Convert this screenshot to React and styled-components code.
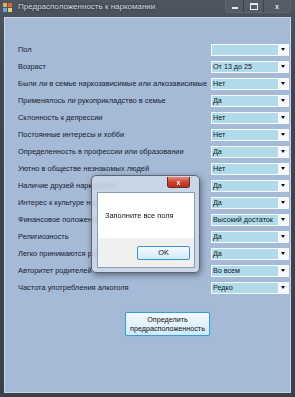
import React from "react";
import styled, { createGlobalStyle } from "styled-components";

const Global = createGlobalStyle`
  html, body { margin: 0; padding: 0; background: #3a414b; }
  body { font-family: "Liberation Sans", Arial, sans-serif; }
`;

const Window = styled.div`
  position: relative;
  width: 295px;
  height: 397px;
  box-sizing: border-box;
  background: linear-gradient(180deg, #4d5560 0%, #3f4651 20%, #3a414b 100%);
  display: flex;
  flex-direction: column;
  overflow: hidden;
`;

const TitleBar = styled.div`
  height: 17px;
  display: flex;
  align-items: flex-start;
  padding-left: 3px;
  box-sizing: border-box;
`;

const AppIcon = styled.div`
  width: 9px;
  height: 9px;
  margin-top: 3px;
  display: grid;
  grid-template-columns: 1fr 1fr;
  gap: 1px;
  span:nth-child(1) { background: #e8b04a; }
  span:nth-child(2) { background: #d8663a; }
  span:nth-child(3) { background: #6aa3d8; }
  span:nth-child(4) { background: #e0d070; }
`;

const Title = styled.div`
  margin-left: 6px;
  margin-top: 2px;
  font-family: "Liberation Sans", Arial, sans-serif;
  font-size: 8px;
  color: #d4d9e0;
  text-shadow: 0 0 3px rgba(0, 0, 0, 0.6);
  flex: 1;
`;

const Controls = styled.div`
  display: flex;
  height: 12px;
  margin-right: 4px;
  background: rgba(255, 255, 255, 0.05);
  border: 1px solid rgba(255, 255, 255, 0.08);
  border-top: none;
  border-radius: 0 0 3px 3px;
`;

const Ctrl = styled.div`
  width: ${(p) => p.$w}px;
  height: 100%;
  display: flex;
  align-items: center;
  justify-content: center;
  border-left: ${(p) => (p.$first ? "none" : "1px solid rgba(0,0,0,0.3)")};
  color: #dfe3e8;
  font-size: 7px;
  font-weight: bold;
`;

const MinGlyph = styled.div`
  width: 6px;
  height: 2px;
  margin-top: 4px;
  background: #e4e8ec;
`;

const MaxGlyph = styled.div`
  width: 6px;
  height: 4px;
  border: 1px solid #e4e8ec;
  border-top-width: 2px;
`;

const Client = styled.div`
  flex: 1;
  margin: 0 4px 4px 4px;
  background: #a5bad6;
  border: 1px solid #c8d4e2;
  box-sizing: border-box;
  display: flex;
  flex-direction: column;
`;

const Form = styled.div`
  display: flex;
  flex-direction: column;
  padding: 23px 1px 0 13px;
`;

const Row = styled.div`
  height: 17px;
  display: flex;
  align-items: center;
  justify-content: space-between;
`;

const Label = styled.div`
  font-family: "Liberation Sans", Arial, sans-serif;
  font-size: 7.45px;
  color: #152032;
  white-space: nowrap;
  overflow: hidden;
`;

const Combo = styled.div`
  flex: 0 0 78px;
  height: 12px;
  box-sizing: border-box;
  border: 1px solid #f4f8fb;
  background: #f6f9fb;
  display: flex;
  align-items: stretch;
`;

const ComboValue = styled.div`
  flex: 1;
  background: #b2dbe9;
  font-family: "Liberation Sans", Arial, sans-serif;
  font-size: 7.2px;
  line-height: 10px;
  color: #0e1826;
  padding-left: 1px;
  white-space: nowrap;
  overflow: hidden;
`;

const Arrow = styled.div`
  width: 10px;
  display: flex;
  align-items: center;
  justify-content: center;
  &::after {
    content: "";
    border-left: 2.5px solid transparent;
    border-right: 2.5px solid transparent;
    border-top: 3px solid #111;
  }
`;

const ButtonRow = styled.div`
  padding: 16px 0 0 120px;
`;

const ActionButton = styled.div`
  width: 85px;
  height: 24px;
  box-sizing: border-box;
  border: 1px solid #3b9bd6;
  border-radius: 2px;
  background: linear-gradient(180deg, #f2fafe 0%, #e2f2fb 50%, #cfe9f8 100%);
  box-shadow: 0 0 2px #7cc4ee;
  display: flex;
  align-items: center;
  justify-content: center;
  text-align: center;
  font-family: "Liberation Sans", Arial, sans-serif;
  font-size: 7.2px;
  line-height: 9px;
  color: #111;
`;

const Dialog = styled.div`
  position: absolute;
  left: 91px;
  top: 175px;
  width: 109px;
  height: 98px;
  box-sizing: border-box;
  padding: 16px 4px 4px 5px;
  background: rgba(210, 222, 236, 0.78);
  backdrop-filter: blur(2px);
  border: 1px solid #5a6472;
  border-radius: 5px;
  box-shadow: 1px 2px 6px rgba(0, 0, 0, 0.45);
  display: flex;
  flex-direction: column;
`;

const DialogClose = styled.div`
  position: absolute;
  top: 1px;
  right: 9px;
  width: 21px;
  height: 10px;
  border-radius: 0 0 3px 3px;
  background: linear-gradient(180deg, #e88a7a 0%, #c9402c 55%, #b8301e 100%);
  border: 1px solid #6e2a20;
  border-top: none;
  color: #fff;
  font-size: 7px;
  font-weight: bold;
  display: flex;
  align-items: center;
  justify-content: center;
  font-family: "Liberation Sans", Arial, sans-serif;
`;

const DialogBody = styled.div`
  flex: 1;
  display: flex;
  flex-direction: column;
  border: 1px solid #8a9ab0;
`;

const DialogMessage = styled.div`
  height: 45px;
  background: #ffffff;
  display: flex;
  align-items: center;
  padding-left: 7px;
  font-family: "Liberation Sans", Arial, sans-serif;
  font-size: 7.4px;
  color: #111;
`;

const DialogFooter = styled.div`
  flex: 1;
  background: #f0f0f0;
  display: flex;
  align-items: center;
  justify-content: flex-end;
  padding-right: 4px;
`;

const OkButton = styled.div`
  width: 53px;
  height: 14px;
  box-sizing: border-box;
  border: 1px solid #3c94d0;
  border-radius: 2px;
  background: linear-gradient(180deg, #f3fafe 0%, #e3f2fb 50%, #d2eaf8 100%);
  display: flex;
  align-items: center;
  justify-content: center;
  font-family: "Liberation Sans", Arial, sans-serif;
  font-size: 7.4px;
  color: #111;
`;

const rows = [
  ["Пол", ""],
  ["Возраст", "От 13 до 25"],
  ["Были ли в семье наркозависимые или алкозависимые", "Нет"],
  ["Применялось ли рукоприкладство в семье", "Да"],
  ["Склонность к депрессии", "Нет"],
  ["Постоянные интересы и хобби", "Нет"],
  ["Определенность в профессии или образовании", "Да"],
  ["Уютно в обществе незнакомых людей", "Нет"],
  ["Наличие друзей наркоманов", "Да"],
  ["Интерес к культуре наркомании", "Да"],
  ["Финансовое положение", "Высокий достаток"],
  ["Религиозность", "Да"],
  ["Легко принимаются решения", "Да"],
  ["Авторитет родителей", "Во всем"],
  ["Частота употребления алкоголя", "Редко"],
];

export default function App() {
  return (
    <>
      <Global />
      <Window>
        <TitleBar>
          <AppIcon>
            <span />
            <span />
            <span />
            <span />
          </AppIcon>
          <Title>Предрасположенность к наркомании</Title>
          <Controls>
            <Ctrl $w={17} $first>
              <MinGlyph />
            </Ctrl>
            <Ctrl $w={19}>
              <MaxGlyph />
            </Ctrl>
            <Ctrl $w={26}>x</Ctrl>
          </Controls>
        </TitleBar>
        <Client>
          <Form>
            {rows.map(([label, value]) => (
              <Row key={label}>
                <Label>{label}</Label>
                <Combo>
                  <ComboValue>{value}</ComboValue>
                  <Arrow />
                </Combo>
              </Row>
            ))}
          </Form>
          <ButtonRow>
            <ActionButton>
              Определить
              <br />
              предрасположенность
            </ActionButton>
          </ButtonRow>
        </Client>
        <Dialog>
          <DialogClose>x</DialogClose>
          <DialogBody>
            <DialogMessage>Заполните все поля</DialogMessage>
            <DialogFooter>
              <OkButton>OK</OkButton>
            </DialogFooter>
          </DialogBody>
        </Dialog>
      </Window>
    </>
  );
}
